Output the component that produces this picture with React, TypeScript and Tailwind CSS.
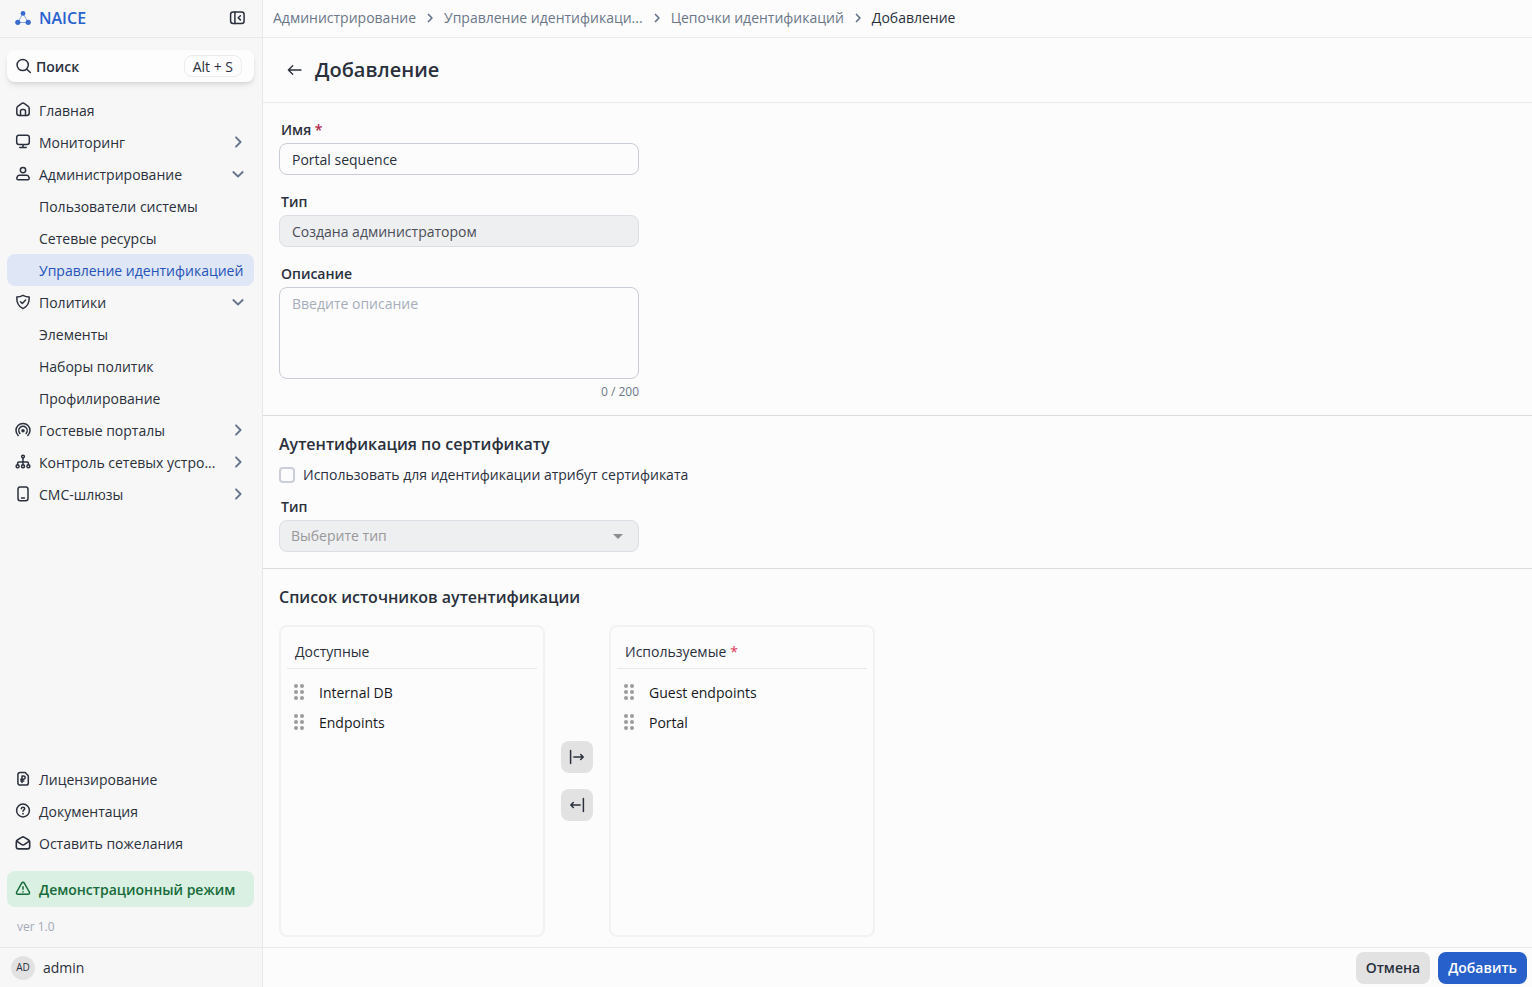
import { useState, type ReactNode } from "react";

type IconProps = { children: ReactNode; className?: string; width?: number };

function Icon({ children, className = "", width = 1.5 }: IconProps) {
  return (
    <svg
      viewBox="0 0 16 16"
      className={`size-4 shrink-0 ${className}`}
      fill="none"
      stroke="currentColor"
      strokeWidth={width}
      strokeLinecap="round"
      strokeLinejoin="round"
      aria-hidden="true"
    >
      {children}
    </svg>
  );
}

const icons = {
  home: (
    <Icon>
      <path d="M1.8 6.4c0-.9.3-1.5 1-2.1l3.700-2.700a2.400 2.400 0 0 1 3 0l3.700 2.700c.7.6 1 1.200 1 2.100v4.600a2.500 2.500 0 0 1-2.500 2.500H4.300a2.500 2.500 0 0 1-2.500-2.500Z" />
      <path d="M5.500 13.500V9.300a1.800 1.800 0 0 1 1.800-1.800h1.400a1.800 1.800 0 0 1 1.800 1.800v4.200" />
    </Icon>
  ),
  monitor: (
    <Icon>
      <rect x="1.700" y="1.300" width="12.600" height="9.200" rx="2.200" />
      <path d="M8 10.700v2.800M4.800 13.500h6.400" />
    </Icon>
  ),
  user: (
    <Icon>
      <circle cx="8" cy="4.100" r="2.700" />
      <path d="M4.300 9.300h7.400a2.200 2.200 0 0 1 2 1.400l.4 1.200c.4 1-.2 1.800-1.200 1.800H3.100c-1 0-1.600-.8-1.200-1.800l.4-1.200a2.200 2.200 0 0 1 2-1.400Z" />
    </Icon>
  ),
  shield: (
    <Icon>
      <path d="M8 1.300c2 1.100 3.900 1.700 6.200 1.800.3 5.200-1.300 9.200-6.200 11.500C3.100 12.300 1.500 8.300 1.800 3.100 4.100 3 6 2.400 8 1.300Z" />
      <path d="m5.500 7.700 1.800 1.800 3.300-3.400" />
    </Icon>
  ),
  portal: (
    <Icon width={1.500}>
      <path d="M3.200 13.500a7 7 0 1 1 9.600 0" />
      <path d="M4.900 11.400a4.200 4.200 0 1 1 6.200 0" />
      <circle cx="8" cy="8.700" r="1" fill="currentColor" />
    </Icon>
  ),
  tree: (
    <Icon width={1.500}>
      <circle cx="8" cy="2.600" r="1.400" />
      <circle cx="2.600" cy="12.300" r="1.500" />
      <circle cx="8" cy="12.300" r="1.500" />
      <circle cx="13.400" cy="12.300" r="1.500" />
      <path d="M8 4.200v6.500M2.600 10.700V9.200c0-.8.5-1.300 1.300-1.300h8.200c.8 0 1.300.5 1.300 1.300v1.500" />
    </Icon>
  ),
  phone: (
    <Icon>
      <rect x="3" y="1.100" width="10" height="13.600" rx="2.200" />
      <path d="M6.500 12h3" />
    </Icon>
  ),
  license: (
    <Icon>
      <path d="M2.900 3.700a2.200 2.200 0 0 1 2.200-2.200h5.100l3.100 3.200v7.200a2.200 2.200 0 0 1-2.200 2.200h-6a2.200 2.200 0 0 1-2.200-2.200Z" />
      <path d="M7 11.500V4.900h1.500a1.700 1.700 0 0 1 0 3.400H5.800M5.800 10h3" />
    </Icon>
  ),
  help: (
    <Icon>
      <circle cx="8" cy="7.500" r="6.400" />
      <path d="M6.300 5.700c.2-1 .8-1.500 1.700-1.500 1 0 1.700.6 1.700 1.500 0 1.200-1.700 1.200-1.700 2.500" />
      <path d="M8 10.500v.2" strokeWidth="1.700" />
    </Icon>
  ),
  mail: (
    <Icon width={1.600}>
      <path d="M1.300 7c0-.9.300-1.500 1.100-2l4.200-2.700a2.500 2.500 0 0 1 2.800 0L13.600 5c.8.500 1.100 1.100 1.100 2v4.700a2.200 2.200 0 0 1-2.200 2.200h-9a2.200 2.200 0 0 1-2.200-2.200Z" />
      <path d="m1.700 6.100 4.700 3.300a2.700 2.700 0 0 0 3.200 0l4.700-3.300" />
    </Icon>
  ),
};

function Chevron({ down = false }: { down?: boolean }) {
  return (
    <Icon className="text-[#64748b]" width={1.800}>
      <path d={down ? "M3.300 6 8 10.500 12.700 6" : "m6 3.300 4.600 4.700L6 12.700"} />
    </Icon>
  );
}

type NavEntry = { label: string; icon?: ReactNode; state?: "open" | "closed"; active?: boolean };

const mainNav: NavEntry[] = [
  { label: "Главная", icon: icons.home },
  { label: "Мониторинг", icon: icons.monitor, state: "closed" },
  { label: "Администрирование", icon: icons.user, state: "open" },
  { label: "Пользователи системы" },
  { label: "Сетевые ресурсы" },
  { label: "Управление идентификацией", active: true },
  { label: "Политики", icon: icons.shield, state: "open" },
  { label: "Элементы" },
  { label: "Наборы политик" },
  { label: "Профилирование" },
  { label: "Гостевые порталы", icon: icons.portal, state: "closed" },
  { label: "Контроль сетевых устро...", icon: icons.tree, state: "closed" },
  { label: "СМС-шлюзы", icon: icons.phone, state: "closed" },
];

const helpNav: NavEntry[] = [
  { label: "Лицензирование", icon: icons.license },
  { label: "Документация", icon: icons.help },
  { label: "Оставить пожелания", icon: icons.mail },
];

function NavItem({ label, icon, state, active }: NavEntry) {
  const look = `flex h-8 w-full items-center gap-2 rounded-lg px-2 text-left ${
    active ? "bg-[#dfe6f6] text-[#2553b8]" : "text-[#2a303c]"
  }`;
  const content = (
    <>
      {icon ?? <span className="w-4 shrink-0" />}
      <span className={state ? "min-w-0 flex-1 whitespace-nowrap" : "whitespace-nowrap"}>{label}</span>
      {state && <Chevron down={state === "open"} />}
    </>
  );
  return (
    <li>
      {state ? (
        <button type="button" aria-expanded={state === "open"} className={look}>
          {content}
        </button>
      ) : (
        <a href="#" aria-current={active ? "page" : undefined} className={look}>
          {content}
        </a>
      )}
    </li>
  );
}

function Sidebar() {
  return (
    <aside className="flex w-[263px] shrink-0 flex-col border-r border-[#e5e7eb] bg-[#f7f7f7] leading-[21px]">
      <div className="flex h-[38px] items-center border-b border-[#e8e9ec] pr-4 pb-[2px] pl-[15px]">
        <svg viewBox="0 0 16 16" className="size-4" aria-hidden="true">
          <path d="M8 3.500 2.800 12.500h10.400Z" fill="none" stroke="#8faae4" strokeWidth="1" />
          <g fill="#3a6bd0">
            <circle cx="8" cy="3.400" r="2.400" />
            <circle cx="2.800" cy="12.300" r="2.600" />
            <circle cx="13.200" cy="12.300" r="2.600" />
          </g>
        </svg>
        <span className="ml-2 flex-1 text-base font-semibold text-[#2962d0]">NAICE</span>
        <button type="button" aria-label="Свернуть меню">
          <svg
            viewBox="0 0 18 16"
            className="h-4 w-[18px]"
            fill="none"
            stroke="currentColor"
            strokeWidth="1.500"
            strokeLinecap="round"
            strokeLinejoin="round"
          >
            <rect x="2.600" y="2" width="13.500" height="11.500" rx="2.500" />
            <path d="M6.900 2v11.500M12.400 5.700l-2.200 2.100 2.200 2.100" />
          </svg>
        </button>
      </div>

      <div className="flex flex-1 flex-col px-2 pt-3 pl-[7px]">
        <button
          type="button"
          className="flex h-8 shrink-0 items-center rounded-lg bg-[#fdfdfd] pr-3 pl-2 shadow-md shadow-black/10"
        >
          <Icon>
            <circle cx="7.700" cy="7" r="5.600" />
            <path d="m11.800 11.200 3.500 3.300" />
          </Icon>
          <span className="ml-[5px] flex-1 text-left font-semibold">Поиск</span>
          <kbd className="flex h-[22px] items-center rounded-lg border border-[#eaebee] px-2 font-[inherit]">
            Alt + S
          </kbd>
        </button>

        <nav aria-label="Основное меню" className="mt-3">
          <ul>
            {mainNav.map((item) => (
              <NavItem key={item.label} {...item} />
            ))}
          </ul>
        </nav>

        <nav aria-label="Справка" className="mt-auto pt-6">
          <ul>
            {helpNav.map((item) => (
              <NavItem key={item.label} {...item} />
            ))}
          </ul>
        </nav>

        <div className="mt-3 flex h-9 items-center gap-2 rounded-lg bg-[#d9f0e2] px-2 font-bold text-[#176b3a]">
          <Icon>
            <path d="M6.700 2.100a1.500 1.500 0 0 1 2.600 0l5 8.900a1.500 1.500 0 0 1-1.300 2.300H3A1.500 1.500 0 0 1 1.700 11Z" />
            <path d="M8 5.800v2.500M8 10.800v.1" />
          </Icon>
          <span className="whitespace-nowrap font-semibold">Демонстрационный режим</span>
        </div>
        <p className="flex h-10 items-center px-[10px] text-xs leading-[18px] text-[#a3abb9]">ver 1.0</p>
      </div>

      <div className="flex h-10 items-center gap-2 border-t border-[#e8e9ec] px-[11px]">
        <span className="flex size-6 items-center justify-center rounded-full bg-[#e2e2e2] text-[10px]">
          AD
        </span>
        <span>admin</span>
      </div>
    </aside>
  );
}

const crumbs = ["Администрирование", "Управление идентификаци...", "Цепочки идентификаций"];

function Breadcrumbs() {
  return (
    <nav aria-label="Навигационная цепочка" className="h-[38px] border-b border-[#e8e9ec] px-[10px] pb-[2px]">
      <ol className="flex h-full items-center">
        {crumbs.map((crumb) => (
          <li key={crumb} className="flex items-center">
            <a href="#" className="whitespace-nowrap text-[#6b7789]">
              {crumb}
            </a>
            <Icon className="mx-[6px] text-[#64748b]" width={1.700}>
              <path d="m6.500 4.500 3.400 3.500-3.400 3.500" />
            </Icon>
          </li>
        ))}
        <li aria-current="page">Добавление</li>
      </ol>
    </nav>
  );
}

function Label({ htmlFor, children }: { htmlFor: string; children: ReactNode }) {
  return (
    <label htmlFor={htmlFor} className="mb-[3px] block px-[2px] font-semibold">
      {children}
    </label>
  );
}

function Grip() {
  return (
    <svg viewBox="0 0 12 16" className="h-4 w-3 text-[#9c9a9a]" fill="currentColor" aria-hidden="true">
      {[2, 8, 14].map((y) => (
        <g key={y}>
          <circle cx="3" cy={y} r="2" />
          <circle cx="9" cy={y} r="2" />
        </g>
      ))}
    </svg>
  );
}

function SourceList({ title, items, required }: { title: string; items: string[]; required?: boolean }) {
  return (
    <div className="min-h-[312px] w-[266px] rounded-lg border-2 border-[#f2f2f4] px-[6px] pt-[6px] leading-[21px]">
      <h3 className="flex h-9 items-center gap-1 border-b border-[#e8e9ee] px-2 pt-px">
        {title}
        {required && <span className="text-[#dc3558]">*</span>}
      </h3>
      <ul className="pt-2">
        {items.map((item) => (
          <li key={item} className="flex h-[30px] items-center gap-[14px] px-[6px] text-[#16181d]">
            <Grip />
            {item}
          </li>
        ))}
      </ul>
    </div>
  );
}

const moveButton = "flex size-8 items-center justify-center rounded-lg bg-[#e2e2e2]";

export default function App() {
  const [name, setName] = useState("Portal sequence");
  const [description, setDescription] = useState("");
  const [useAttribute, setUseAttribute] = useState(false);

  return (
    <div className="flex min-h-screen bg-[#fcfcfc] font-['Open_Sans',sans-serif] text-sm leading-5 text-[#2a303c]">
      <Sidebar />
      <main className="flex min-w-0 flex-1 flex-col">
        <Breadcrumbs />
        <header className="flex h-[65px] items-center gap-3 border-b border-[#e8e9ec] px-6">
          <button type="button" aria-label="Назад">
            <Icon width={1.400}>
              <path d="M14 8H1.500M5.700 3.800 1.400 8l4.300 4.200" />
            </Icon>
          </button>
          <h1 className="text-xl leading-[30px] font-semibold">Добавление</h1>
        </header>

        <form className="flex flex-1 flex-col" onSubmit={(event) => event.preventDefault()}>
          <section className="flex flex-col gap-[17px] border-b border-[#d9dbdf] px-4 pt-[17px] pb-[14px]">
            <div className="w-[360px]">
              <Label htmlFor="name">
                Имя <span className="text-[#b3264c]">*</span>
              </Label>
              <input
                id="name"
                value={name}
                onChange={(event) => setName(event.target.value)}
                className="block h-8 w-full rounded-lg border border-[#c8ccd6] px-3"
              />
            </div>
            <div className="w-[360px]">
              <Label htmlFor="kind">Тип</Label>
              <input
                id="kind"
                disabled
                value="Создана администратором"
                className="block h-8 w-full rounded-lg border border-[#dcdee5] bg-[#eeeff1] px-3 text-[#4a4e57]"
              />
            </div>
            <div className="w-[360px]">
              <Label htmlFor="description">Описание</Label>
              <textarea
                id="description"
                maxLength={200}
                placeholder="Введите описание"
                value={description}
                onChange={(event) => setDescription(event.target.value)}
                className="block h-[92px] w-full resize-none rounded-lg border border-[#c8ccd6] px-3 py-[6px] placeholder:text-[#a5adba]"
              />
              <p className="mt-1 text-right text-xs leading-[18px] text-[#6b7789]">{description.length} / 200</p>
            </div>
          </section>

          <section className="border-b border-[#d9dbdf] px-4 pt-4 pb-4">
            <h2 className="text-base font-semibold">Аутентификация по сертификату</h2>
            <label className="mt-[9px] flex w-fit items-center gap-2">
              <input
                type="checkbox"
                checked={useAttribute}
                onChange={(event) => setUseAttribute(event.target.checked)}
                className="size-4 appearance-none rounded-sm border-2 border-[#cbced9] checked:border-[#2962d0] checked:bg-[#2962d0]"
              />
              Использовать для идентификации атрибут сертификата
            </label>
            <div className="mt-3 w-[360px]">
              <Label htmlFor="attribute">Тип</Label>
              <div className="relative">
                <select
                  id="attribute"
                  disabled
                  className="block h-8 w-full appearance-none rounded-lg border border-[#dcdee5] bg-[#eeeff1] px-[11px] text-[#989898] opacity-100"
                >
                  <option>Выберите тип</option>
                </select>
                <svg
                  viewBox="0 0 10 5"
                  className="pointer-events-none absolute top-[14px] right-4 h-[5px] w-[10px]"
                  fill="#8d8d8d"
                  aria-hidden="true"
                >
                  <path d="M0 0h10L5 5Z" />
                </svg>
              </div>
            </div>
          </section>

          <section className="px-4 pt-4 pb-[10px]">
            <h2 className="text-base font-semibold">Список источников аутентификации</h2>
            <div className="mt-4 flex items-center gap-4">
              <SourceList title="Доступные" items={["Internal DB", "Endpoints"]} />
              <div className="flex flex-col gap-4">
                <button type="button" aria-label="Добавить в используемые" className={moveButton}>
                  <Icon width={1.500}>
                    <path d="M1.600 1.500v13M4.800 8h9.400M11.700 5.500 14.200 8l-2.500 2.500" />
                  </Icon>
                </button>
                <button type="button" aria-label="Убрать из используемых" className={moveButton}>
                  <Icon width={1.500}>
                    <path d="M14.400 1.500v13M11.200 8H1.800M4.300 5.500 1.800 8l2.500 2.500" />
                  </Icon>
                </button>
              </div>
              <SourceList title="Используемые" items={["Guest endpoints", "Portal"]} required />
            </div>
          </section>

          <footer className="mt-auto flex h-10 items-center justify-end gap-2 border-t border-[#e8e9ec] px-[5px]">
            <button type="button" className="h-8 rounded-lg bg-[#e2e2e2] px-[10px] font-semibold">
              Отмена
            </button>
            <button type="submit" className="h-8 rounded-lg bg-[#275fcb] px-[10px] font-semibold text-white">
              Добавить
            </button>
          </footer>
        </form>
      </main>
    </div>
  );
}
